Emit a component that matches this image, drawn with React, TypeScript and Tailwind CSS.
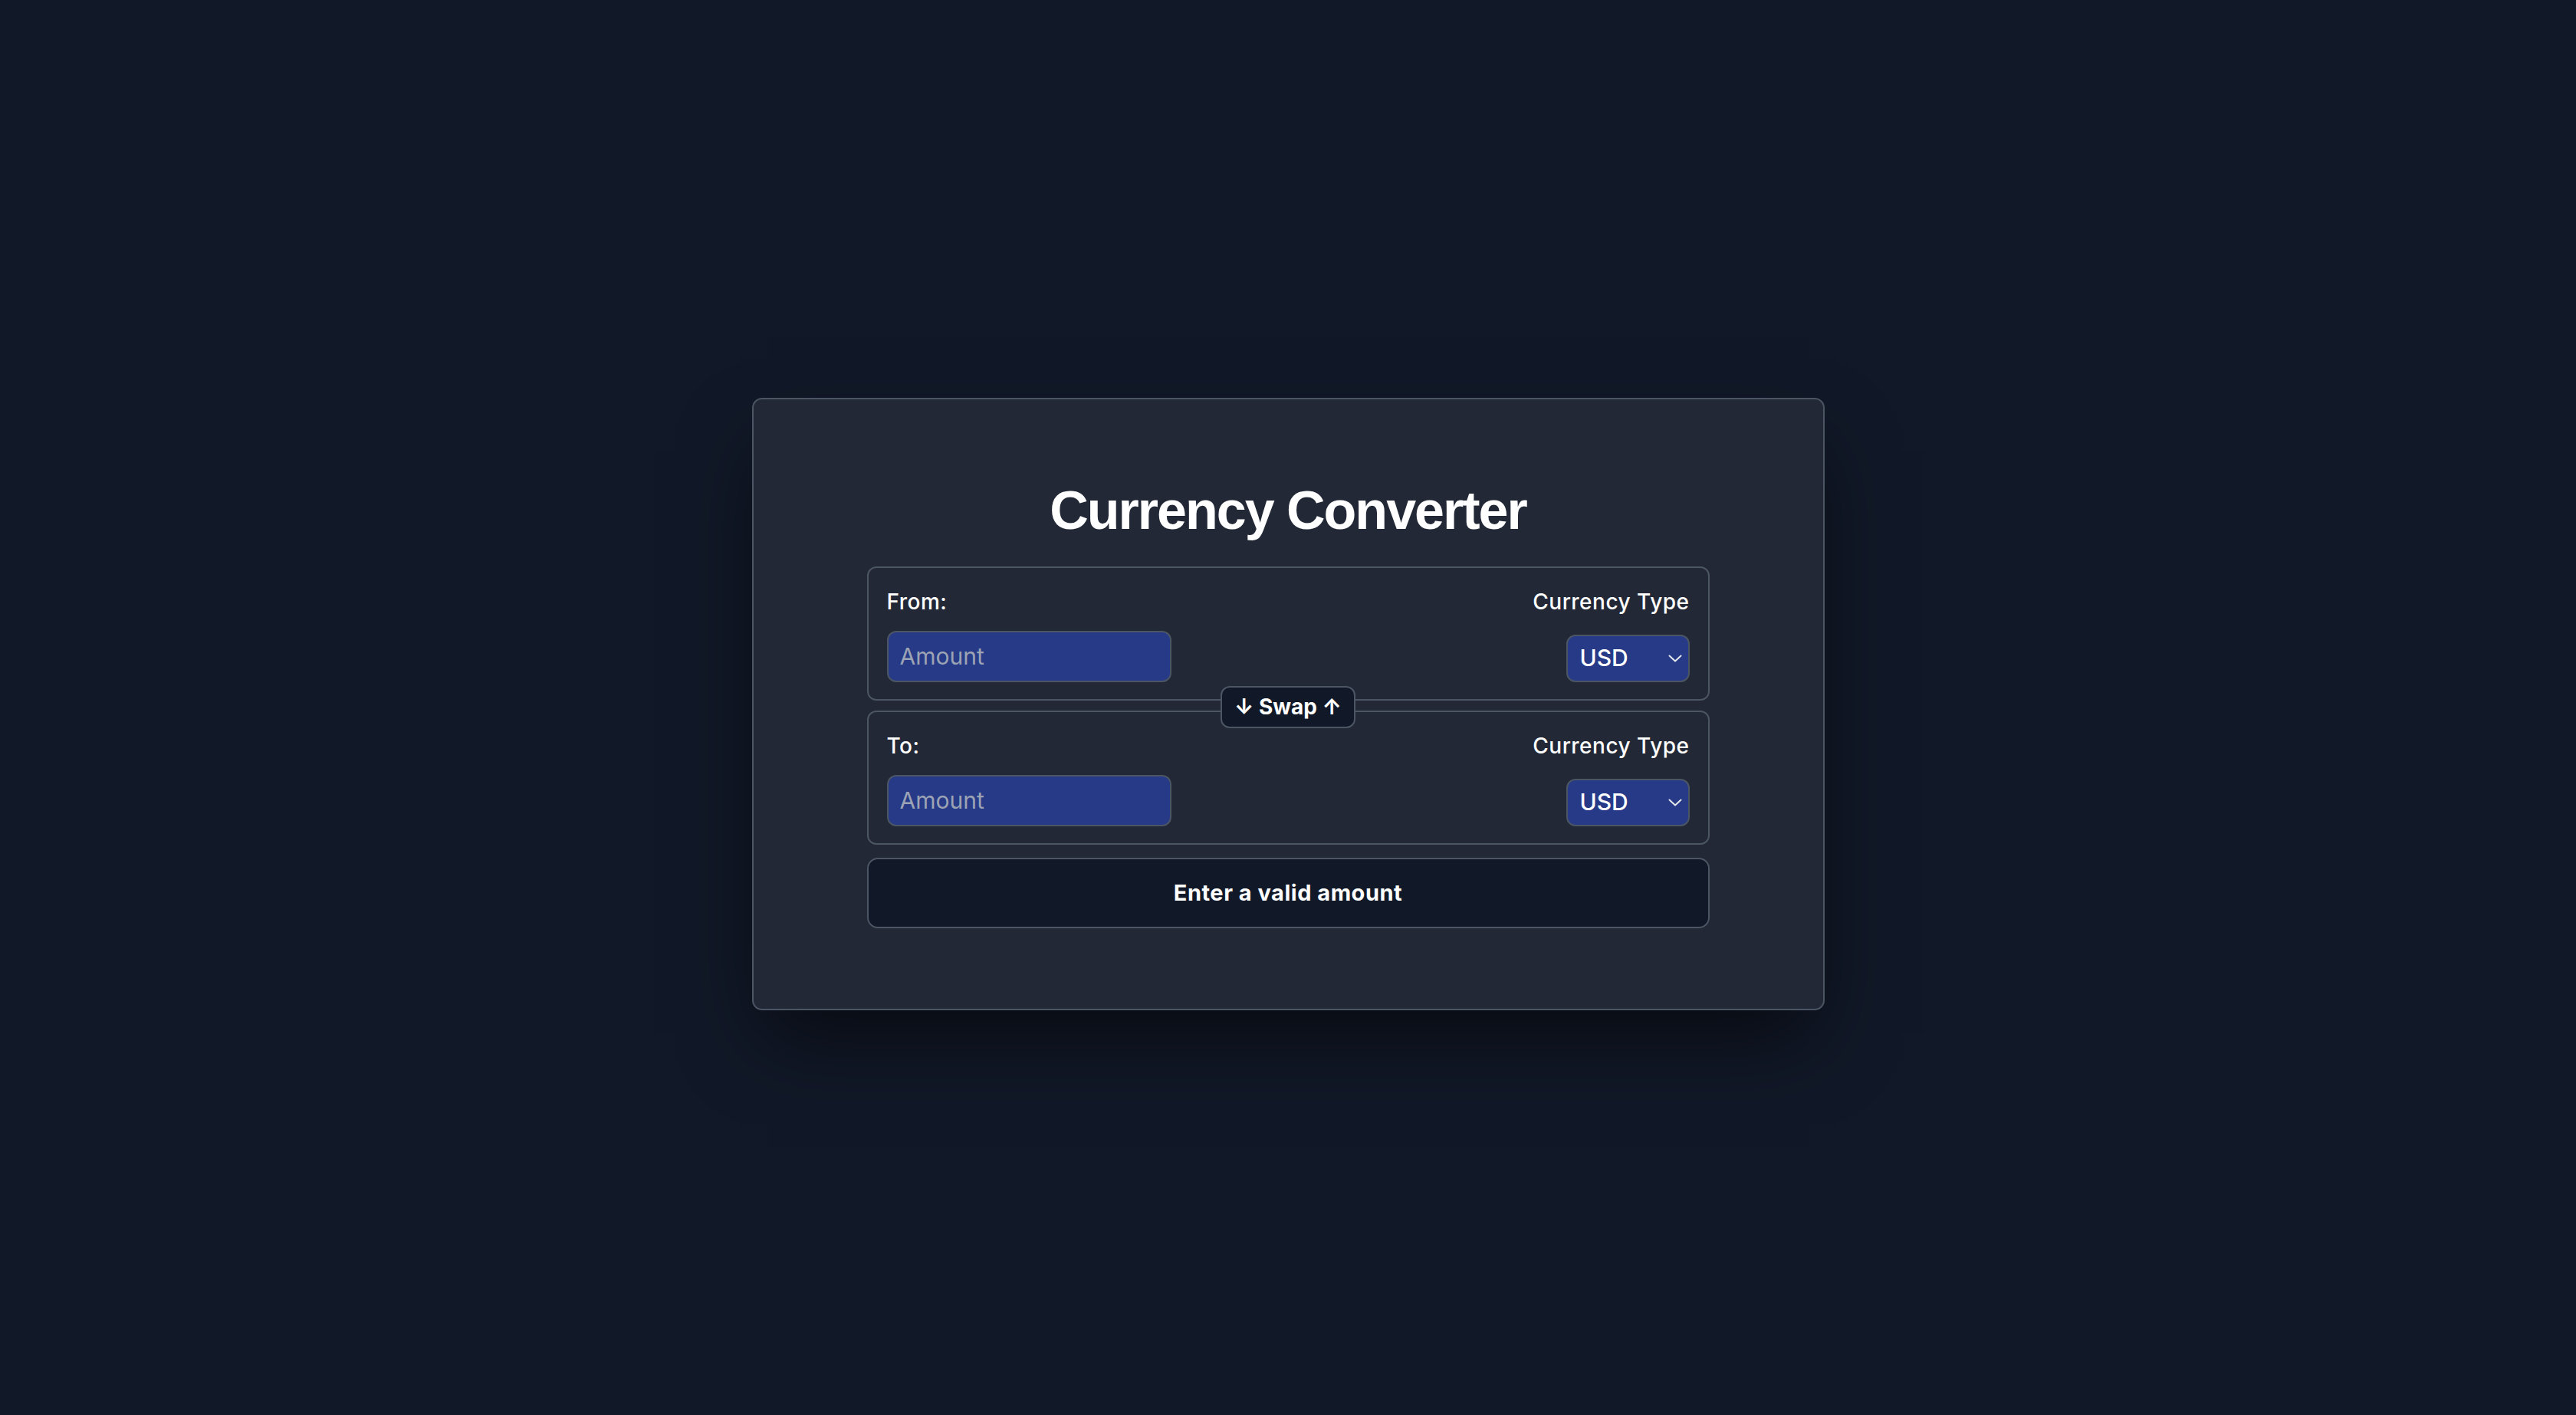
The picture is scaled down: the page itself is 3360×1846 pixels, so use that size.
import React from "react";

function Chevron() {
  return (
    <svg width="18" height="10" viewBox="0 0 18 10" fill="none" className="shrink-0">
      <path d="M1.5 1.5 L9 8.5 L16.5 1.5" stroke="#e5e7eb" strokeWidth="2" strokeLinecap="round" strokeLinejoin="round" />
    </svg>
  );
}

function Row({ label }: { label: string }) {
  return (
    <div className="flex justify-between rounded-[12px] border-2 border-[#4b5563] px-[24px] pt-[24px] pb-[22px]">
      <div className="flex flex-col gap-[18px]">
        <label className="text-[28px] leading-[40px] font-medium tracking-[0.5px] text-white">{label}</label>
        <input
          type="text"
          placeholder="Amount"
          className="w-[371px] h-[67px] rounded-[12px] border-2 border-[#4b5563] bg-[#263a88] px-[15px] text-[30px] text-white placeholder:text-[#9ca3b4] outline-none"
        />
      </div>
      <div className="flex flex-col items-end justify-between">
        <span className="text-[28px] leading-[40px] font-medium tracking-[0.5px] text-white">Currency Type</span>
        <div className="flex h-[62px] w-[161px] items-center justify-between rounded-[12px] border-2 border-[#4b5563] bg-[#263a88] pl-[16px] pr-[8px]">
          <span className="text-[30px] font-medium text-white">USD</span>
          <Chevron />
        </div>
      </div>
    </div>
  );
}

export default function App() {
  return (
    <div
      className="flex min-h-screen items-center justify-center bg-[#111827] pb-[10px]"
      style={{ fontFamily: "Inter, 'Noto Sans', sans-serif" }}
    >
      <div className="w-[1399px] rounded-[13px] border-2 border-[#4b5563] bg-[#222836] px-[148px] pt-[105px] pb-[105px] shadow-[0_50px_100px_-20px_rgba(0,0,0,0.6)]">
        <h1
          className="text-center text-[70px] leading-[80px] font-bold text-white tracking-[-2px]"
          style={{ fontFamily: "'Liberation Sans', Arial, sans-serif" }}
        >
          Currency Converter
        </h1>
        <div className="mt-[33px] flex flex-col">
          <div className="relative">
            <Row label="From:" />
            <div className="relative z-10 -mt-[19px] -mb-[23px] flex justify-center">
              <button className="h-[55px] rounded-[12px] border-2 border-[#4b5563] bg-[#111827] px-[16px] text-[28px] font-bold text-white">
                ↓ Swap ↑
              </button>
            </div>
            <Row label="To:" />
          </div>
          <div className="mt-[17px] flex h-[92px] items-center justify-center rounded-[14px] border-2 border-[#4b5563] bg-[#111827] text-[29px] font-bold tracking-[0.5px] text-white">
            Enter a valid amount
          </div>
        </div>
      </div>
    </div>
  );
}
